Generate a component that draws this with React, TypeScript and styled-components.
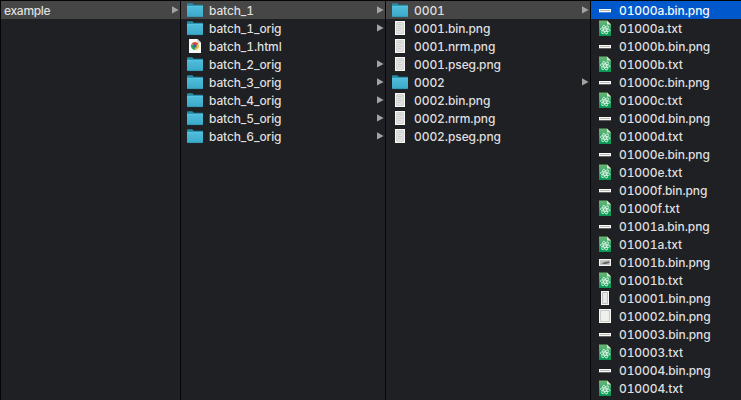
import React from "react";
import styled, { createGlobalStyle } from "styled-components";

const GlobalStyle = createGlobalStyle`
  html, body { margin: 0; padding: 0; background: #1f2024; overflow: hidden; }
`;

const Browser = styled.main`
  display: grid;
  grid-template-columns: 180px 205px 205px 1fr;
  box-sizing: border-box;
  width: 741px;
  height: 400px;
  padding-top: 1px;
  border-left: 1px solid #050506;
  background: #050506;
  color: #dededf;
  font: 500 12px/18px Inter, "Liberation Sans", sans-serif;
  font-variant-numeric: tabular-nums;
  overflow: hidden;
`;

const Column = styled.section`
  box-sizing: border-box;
  min-width: 0;
  border-right: 1px solid #050506;
  background: #1f2024;
  &:last-child { border-right: 0; }
`;

type Highlight = "none" | "path" | "active";
const highlightColors: Record<Highlight, string> = {
  none: "transparent",
  path: "#464646",
  active: "#0059cc",
};

const Row = styled.div<{ $highlight: Highlight; $plain: boolean }>`
  display: flex;
  align-items: center;
  gap: 6px;
  box-sizing: border-box;
  height: 18px;
  padding: 0 1px 0 ${(p) => (p.$plain ? 3 : 6)}px;
  background: ${(p) => highlightColors[p.$highlight]};
  color: ${(p) => (p.$highlight === "active" ? "#f5f8ff" : "inherit")};
`;

const IconSlot = styled.span`
  display: flex;
  flex: none;
  width: 16px;
  height: 18px;
`;

const Name = styled.span<{ $spacing: number }>`
  flex: 1;
  padding-top: 2px;
  white-space: nowrap;
  letter-spacing: ${(p) => p.$spacing}px;
`;

const Arrow = styled.svg`
  flex: none;
  width: 7px;
  height: 8px;
  fill: #a3a3a4;
`;

type Kind = "folder" | "chrome" | "page" | "strip" | "sketch" | "atom" | "tall" | "wide";

function FileIcon({ kind }: { kind: Kind }) {
  return (
    <svg width="16" height="18" viewBox="0 0 16 18">
      {kind === "folder" && (
        <>
          <path d="M0 3Q0 2.3.7 2.3H5.3L6.9 3.7H15.5Q16 3.7 16 4.3V8H0Z" fill="#278ba7" />
          <path d="M0 5H16V15.3Q16 15.9 15.3 15.9H.7Q0 15.9 0 15.3Z" fill="url(#folderFill)" />
          <path d="M0 5.3H16" stroke="#62c9e4" strokeWidth=".6" />
          <path d="M.3 15.6H15.7" stroke="#2b91ad" strokeWidth=".6" />
        </>
      )}
      {kind === "chrome" && (
        <>
          <path d="M2 2H10.5L14 5.5V16H2Z" fill="#f7f7f5" />
          <path d="M10.5 2V5.5H14Z" fill="#c8c8c8" />
          <path d="M8 9 4.5 7A4 4 0 0 1 11.5 7Z" fill="#df4938" />
          <path d="M8 9 11.5 7A4 4 0 0 1 8 13Z" fill="#e9bd35" />
          <path d="M8 9V13A4 4 0 0 1 4.5 7Z" fill="#36a15b" />
          <circle cx="8" cy="9" r="1.7" fill="#3568a6" />
        </>
      )}
      {kind === "page" && (
        <>
          <path d="M3 2H13V16H3Z" fill="#f8f8f7" />
          <path d="M4.7 3.7H11.3V14.3H4.7Z" fill="#e4e4e2" stroke="#b9b9b7" strokeWidth=".6" />
          <path d="M6 5.5H10M6 7.5H9M6 9.5H10M6 11.5H9" stroke="#bcbcba" strokeWidth=".6" />
        </>
      )}
      {kind === "strip" && (
        <>
          <path d="M2 8H14V11.3H2Z" fill="#fafaf8" />
          <path d="M3 9.5H13" stroke="#aaa9a5" strokeWidth=".8" />
        </>
      )}
      {kind === "sketch" && (
        <>
          <path d="M2 6H14V13H2Z" fill="#f4f4f2" />
          <path d="M3 7H13V12H3Z" fill="#c4c4c2" />
          <path d="M4 10.5 8 8.9 12.3 8.2V10L8.5 11Z" fill="#606160" />
        </>
      )}
      {kind === "atom" && (
        <>
          <path d="M2 1.5H10L14 5.5V17H2Z" fill="url(#atomFill)" />
          <path d="M10 1.5V5.5H14Z" fill="#d6e9cf" />
          <g fill="none" stroke="#d9f3e2" strokeWidth=".85">
            <ellipse cx="8.1" cy="10.7" rx="4.8" ry="1.6" transform="rotate(8 8.1 10.7)" />
            <ellipse cx="8.1" cy="10.7" rx="4.8" ry="1.6" transform="rotate(68 8.1 10.7)" />
            <ellipse cx="8.1" cy="10.7" rx="4.8" ry="1.6" transform="rotate(128 8.1 10.7)" />
          </g>
          <circle cx="8.1" cy="10.7" r=".6" fill="#e3f6e9" />
        </>
      )}
      {kind === "tall" && (
        <>
          <path d="M4 2H12V16H4Z" fill="#f7f7f5" />
          <path d="M5.5 3.5H10.5V14.5H5.5Z" fill="#e7e7e5" stroke="#a9a9a7" strokeWidth=".7" />
        </>
      )}
      {kind === "wide" && (
        <>
          <path d="M2 2H14V16H2Z" fill="#f8f8f6" />
          <path d="M3.6 3.5H12.4V14.5H3.6Z" fill="#f0f0ee" stroke="#b8b8b5" strokeWidth=".7" />
        </>
      )}
    </svg>
  );
}

interface Entry {
  name: string;
  kind?: Kind;
  arrow?: boolean;
  highlight?: Highlight;
}

const root: Entry[] = [{ name: "example", arrow: true, highlight: "path" }];

const batches: Entry[] = [
  { name: "batch_1", kind: "folder", arrow: true, highlight: "path" },
  { name: "batch_1_orig", kind: "folder", arrow: true },
  { name: "batch_1.html", kind: "chrome" },
  ...[2, 3, 4, 5, 6].map((n): Entry => ({ name: `batch_${n}_orig`, kind: "folder", arrow: true })),
];

const pages: Entry[] = ["0001", "0002"].flatMap((n, i): Entry[] => [
  { name: n, kind: "folder", arrow: true, highlight: i === 0 ? "path" : "none" },
  ...["bin", "nrm", "pseg"].map((s): Entry => ({ name: `${n}.${s}.png`, kind: "page" })),
]);

const pair = (id: string, kind: Kind = "strip"): Entry[] => [
  { name: `${id}.bin.png`, kind },
  { name: `${id}.txt`, kind: "atom" },
];

const lines: Entry[] = [
  ...["01000a", "01000b", "01000c", "01000d", "01000e", "01000f", "01001a"].flatMap((id) => pair(id)),
  ...pair("01001b", "sketch"),
  { name: "010001.bin.png", kind: "tall" },
  { name: "010002.bin.png", kind: "wide" },
  ...pair("010003"),
  ...pair("010004"),
];
lines[0].highlight = "active";

function FileColumn({ entries, spacing }: { entries: Entry[]; spacing: number }) {
  return (
    <Column>
      {entries.map((entry) => (
        <Row key={entry.name} $highlight={entry.highlight ?? "none"} $plain={!entry.kind}>
          {entry.kind && <IconSlot><FileIcon kind={entry.kind} /></IconSlot>}
          <Name $spacing={spacing}>{entry.name}</Name>
          {entry.arrow && <Arrow viewBox="0 0 7 8"><path d="M0 .3 6.6 3.9 0 7.5Z" /></Arrow>}
        </Row>
      ))}
    </Column>
  );
}

const Gradients = styled.svg`
  position: absolute;
  width: 0;
  height: 0;
`;

export default function App() {
  return (
    <>
      <GlobalStyle />
      <Gradients aria-hidden="true">
        <defs>
          <linearGradient id="folderFill" x1="0" y1="0" x2="0" y2="1">
            <stop stopColor="#50bddb" />
            <stop offset="1" stopColor="#3aa9c9" />
          </linearGradient>
          <linearGradient id="atomFill" x1="0" y1="0" x2="0" y2="1">
            <stop stopColor="#6db573" />
            <stop offset=".5" stopColor="#35a66c" />
            <stop offset="1" stopColor="#079654" />
          </linearGradient>
        </defs>
      </Gradients>
      <Browser>
        <FileColumn entries={root} spacing={-0.3} />
        <FileColumn entries={batches} spacing={-0.12} />
        <FileColumn entries={pages} spacing={-0.08} />
        <FileColumn entries={lines} spacing={-0.09} />
      </Browser>
    </>
  );
}
